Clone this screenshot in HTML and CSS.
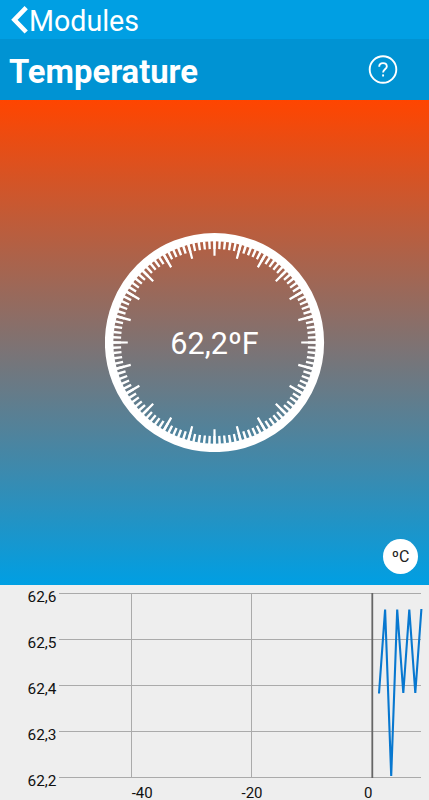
FILE: index.html
```html
<!DOCTYPE html>
<html lang="en">
<head>
  <meta charset="UTF-8" />
  <meta name="viewport" content="width=device-width, initial-scale=1.0" />
  <title>Temperature</title>
  <link rel="stylesheet" href="styles.css">
</head>
<body>
  <!-- Back navigation -->
  <nav class="back-bar">
    <svg class="back-icon" width="17" height="28" viewBox="0 0 17 28">
      <path d="M15.2 1.6 L3.4 13.8 L15.2 26" />
    </svg>
    <span class="back-label">Modules</span>
  </nav>

  <!-- Title bar -->
  <header class="title-bar">
    <h1>Temperature</h1>
    <svg class="help-icon" width="30" height="30" viewBox="0 0 30 30">
      <circle cx="15" cy="14.5" r="13.3" />
      <path d="M11.2 11.7 C11.2 9.2 12.8 8.1 15 8.1 C17.3 8.1 18.8 9.4 18.8 11.4 C18.8 14.2 15.1 14.5 15.1 17.6" />
      <path d="M15.1 19.4 V21.5" />
    </svg>
  </header>

  <!-- Gauge -->
  <main class="gauge-panel">
    <div class="gauge">
      <svg class="dial" width="220" height="220" viewBox="-109.5 -110.5 220 220">
        <circle class="ring" r="105.4" />
        <circle class="minor-ticks" r="97.6" pathLength="120" />
        <circle class="major-ticks" r="94.2" pathLength="24" />
      </svg>
      <span class="reading">62,2ºF</span>
    </div>
    <button class="unit-button">ºC</button>
  </main>

  <!-- History chart -->
  <section class="chart">
    <svg width="429" height="215" viewBox="0 0 429 215">
      <g class="grid">
        <path d="M59 8.5 H421 M59 54.5 H421 M59 100.5 H421 M59 146.5 H421 M59 192.5 H421" />
        <path d="M131.5 8 V193 M251.5 8 V193" />
      </g>
      <path class="axis" d="M372.3 8 V193" />
      <path class="series" d="M379 108.5 L385.1 24.5 L391.2 191 L397.2 24.5 L403.3 108 L409.3 24.5 L415.3 108 L421.4 24" />
      <g class="y-labels">
        <text x="56.5" y="16.7">62,6</text>
        <text x="56.5" y="63">62,5</text>
        <text x="56.5" y="109">62,4</text>
        <text x="56.5" y="155">62,3</text>
        <text x="56.5" y="201">62,2</text>
      </g>
      <g class="x-labels">
        <text x="142.2" y="213.3">-40</text>
        <text x="252" y="213.3">-20</text>
        <text x="368.3" y="213.3">0</text>
      </g>
    </svg>
  </section>
</body>
</html>
```
FILE: styles.css
```css
/* Global styles */
body {
  margin: 0;
  width: 429px;
  height: 800px;
  overflow: hidden;
  background: #eee;
  color: white;
  font-family: Roboto, "Liberation Sans", sans-serif;
}
svg {
  display: block;
  fill: none;
}
/* Navigation */
.back-bar {
  display: flex;
  align-items: center;
  height: 39px;
  padding-left: 11px;
  background: #009fe3;
  box-sizing: border-box;
}
.back-icon {
  stroke: white;
  stroke-width: 4.6;
}
.back-label {
  margin: 3px 0 0 1px;
  font-size: 28.6px;
  line-height: 36px;
}
/* Title */
.title-bar {
  display: flex;
  align-items: center;
  justify-content: space-between;
  height: 61px;
  padding: 0 31px 0 9px;
  background: #0093d3;
  box-sizing: border-box;
}
.title-bar h1 {
  margin: 4px 0 0;
  font-size: 32.8px;
  font-weight: bold;
  line-height: 40px;
}
.help-icon {
  stroke: white;
  stroke-width: 1.9;
}
/* Gauge */
.gauge-panel {
  position: relative;
  display: flex;
  justify-content: center;
  height: 485px;
  padding-top: 132px;
  background: linear-gradient(#ff4500, #009fe3);
  box-sizing: border-box;
}
.gauge {
  display: grid;
  place-items: center;
  width: 220px;
  height: 220px;
}
.dial,
.reading {
  grid-area: 1 / 1;
}
.dial {
  stroke: white;
}
.ring {
  stroke-width: 8.4;
}
/* One dash per tick, shifted by half a dash to centre it on its angle */
.minor-ticks {
  stroke-width: 8.2;
  stroke-dasharray: 0.47 0.53;
  stroke-dashoffset: 0.235;
}
.major-ticks {
  stroke-width: 15;
  stroke-dasharray: 0.096 0.904;
  stroke-dashoffset: 0.048;
}
.reading {
  margin-top: 4px;
  font-size: 30.6px;
  line-height: 36px;
}
.unit-button {
  position: absolute;
  right: 11px;
  bottom: 11px;
  width: 35px;
  height: 35px;
  padding: 0;
  border: none;
  border-radius: 50%;
  background: white;
  color: #222;
  font-family: inherit;
  font-size: 16px;
}
/* Chart */
.chart {
  height: 215px;
  background: #eee;
}
.grid {
  stroke: #aaa;
  stroke-width: 1;
}
.axis {
  stroke: #666;
  stroke-width: 1.8;
}
.series {
  stroke: #0878d0;
  stroke-width: 2.1;
  stroke-linejoin: bevel;
}
.y-labels,
.x-labels {
  fill: #111;
  font-size: 15.4px;
}
.y-labels {
  text-anchor: end;
}
.x-labels {
  text-anchor: middle;
  font-size: 15px;
}
```
